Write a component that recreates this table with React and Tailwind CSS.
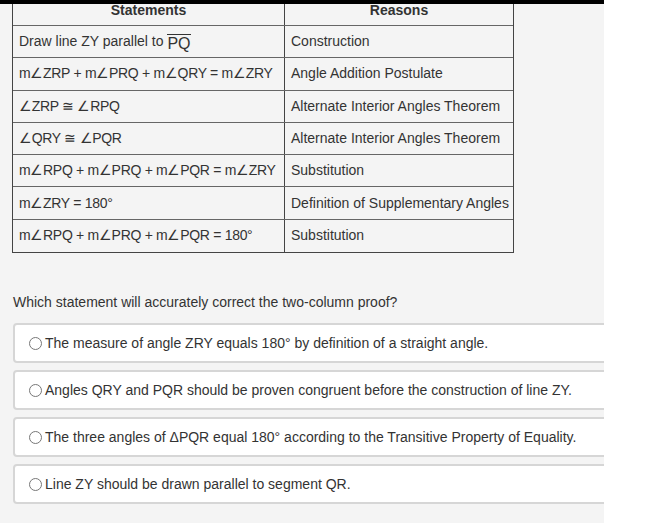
const rows = [
    { s: 'draw', r: 'Construction' },
    { s: 'm∠ZRP + m∠PRQ + m∠QRY = m∠ZRY', r: 'Angle Addition Postulate' },
    { s: '∠ZRP ≅ ∠RPQ', r: 'Alternate Interior Angles Theorem' },
    { s: '∠QRY ≅ ∠PQR', r: 'Alternate Interior Angles Theorem' },
    { s: 'm∠RPQ + m∠PRQ + m∠PQR = m∠ZRY', r: 'Substitution' },
    { s: 'm∠ZRY = 180°', r: 'Definition of Supplementary Angles' },
    { s: 'm∠RPQ + m∠PRQ + m∠PQR = 180°', r: 'Substitution' },
];

const options = [
    'The measure of angle ZRY equals 180° by definition of a straight angle.',
    'Angles QRY and PQR should be proven congruent before the construction of line ZY.',
    'The three angles of ΔPQR equal 180° according to the Transitive Property of Equality.',
    'Line ZY should be drawn parallel to segment QR.',
];

export default function App() {
    return (
        <div className="flex w-[671px] h-[523px] overflow-hidden bg-white font-['Liberation_Sans',Arial,sans-serif] text-[14px] text-[#333]">
            <div className="relative w-[604px] shrink-0 bg-[#f4f4f4] overflow-hidden">
                <div className="relative z-10 h-[4px] bg-black" />

                <div className="ml-[12px] -mt-[9px] w-[502px] border border-[#444] bg-[#f4f4f4]">
                    <div className="grid grid-cols-[272px_1fr] h-[30px] border-b border-[#666] font-bold">
                        <div className="flex items-center justify-center border-r border-[#444]">Statements</div>
                        <div className="flex items-center justify-center">Reasons</div>
                    </div>
                    {rows.map((row, i) => (
                        <div
                            key={i}
                            className={`grid grid-cols-[272px_1fr] h-[32.3px] ${i < rows.length - 1 ? 'border-b border-[#666]' : ''}`}
                        >
                            <div className="flex items-center pl-[6px] border-r border-[#444] whitespace-nowrap tracking-[-0.3px]">
                                {row.s === 'draw' ? (
                                    <span className="tracking-normal">
                                        Draw line ZY parallel to{' '}
                                        <span className="relative top-[3px] inline-block border-t border-[#333] text-[16px] leading-[15px] pt-[1px]">
                                            PQ
                                        </span>
                                    </span>
                                ) : (
                                    row.s
                                )}
                            </div>
                            <div className="flex items-center pl-[6px] whitespace-nowrap">{row.r}</div>
                        </div>
                    ))}
                </div>

                <p className="ml-[13px] mt-[41px] leading-[16px]">Which statement will accurately correct the two-column proof?</p>

                <div className="mt-[13px] flex flex-col gap-[7px]">
                    {options.map((opt, i) => (
                        <div
                            key={i}
                            className="ml-[13px] w-[640px] h-[40px] flex items-center gap-[3px] pl-[14px] bg-white border-2 border-[#d6d6d6] rounded-[4px] whitespace-nowrap"
                        >
                            <span className="w-[13px] h-[13px] rounded-full border border-[#777] bg-white shrink-0" />
                            <span>{opt}</span>
                        </div>
                    ))}
                </div>
            </div>
            <div className="flex-1 bg-white" />
        </div>
    );
}
